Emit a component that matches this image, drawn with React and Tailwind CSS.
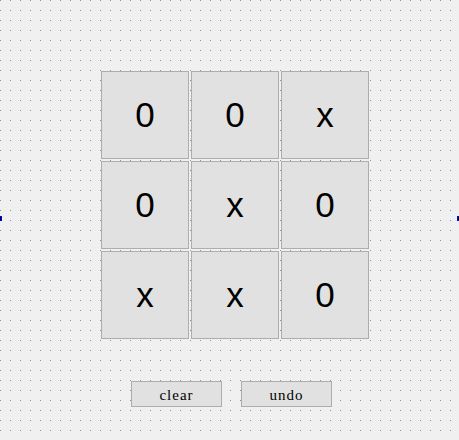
import React from "react";

const cells = ["0", "0", "x", "0", "x", "0", "x", "x", "0"];

export default function App() {
  return (
    <div className="relative w-full h-[440px] bg-[#f0f0f0] bg-[conic-gradient(at_1px_1px,transparent_75%,#929292_0)] bg-[length:10px_10px] overflow-hidden">
      <div className="flex flex-col pt-[71px] pl-[101px]">
        <div className="grid grid-cols-[88px_88px_88px] grid-rows-[88px_88px_88px] gap-[2px] w-fit">
          {cells.map((c, i) => (
            <div
              key={i}
              className="flex items-center justify-center bg-[#e1e1e1] border border-[#adadad] text-black text-[35px] leading-none pb-[1px] font-['Liberation_Sans',Arial,sans-serif]"
            >
              {c}
            </div>
          ))}
        </div>
        <div className="flex gap-[19px] mt-[42px] ml-[30px]">
          <div className="w-[91px] h-[26px] flex items-center justify-center pt-[2px] bg-[#e1e1e1] border border-[#adadad] text-black text-[15px] tracking-[1px] font-['Liberation_Serif',serif]">
            clear
          </div>
          <div className="w-[91px] h-[26px] flex items-center justify-center pt-[2px] bg-[#e1e1e1] border border-[#adadad] text-black text-[15px] tracking-[1px] font-['Liberation_Serif',serif]">
            undo
          </div>
        </div>
      </div>
      <div className="absolute left-0 top-[216px] w-[2px] h-[5px] bg-[#0000ff] flex items-center">
        <div className="w-[1px] h-[3px] bg-black" />
      </div>
      <div className="absolute left-[457px] top-[216px] w-[2px] h-[5px] bg-[#0000ff] flex items-center justify-end">
        <div className="w-[1px] h-[3px] bg-black" />
      </div>
    </div>
  );
}
